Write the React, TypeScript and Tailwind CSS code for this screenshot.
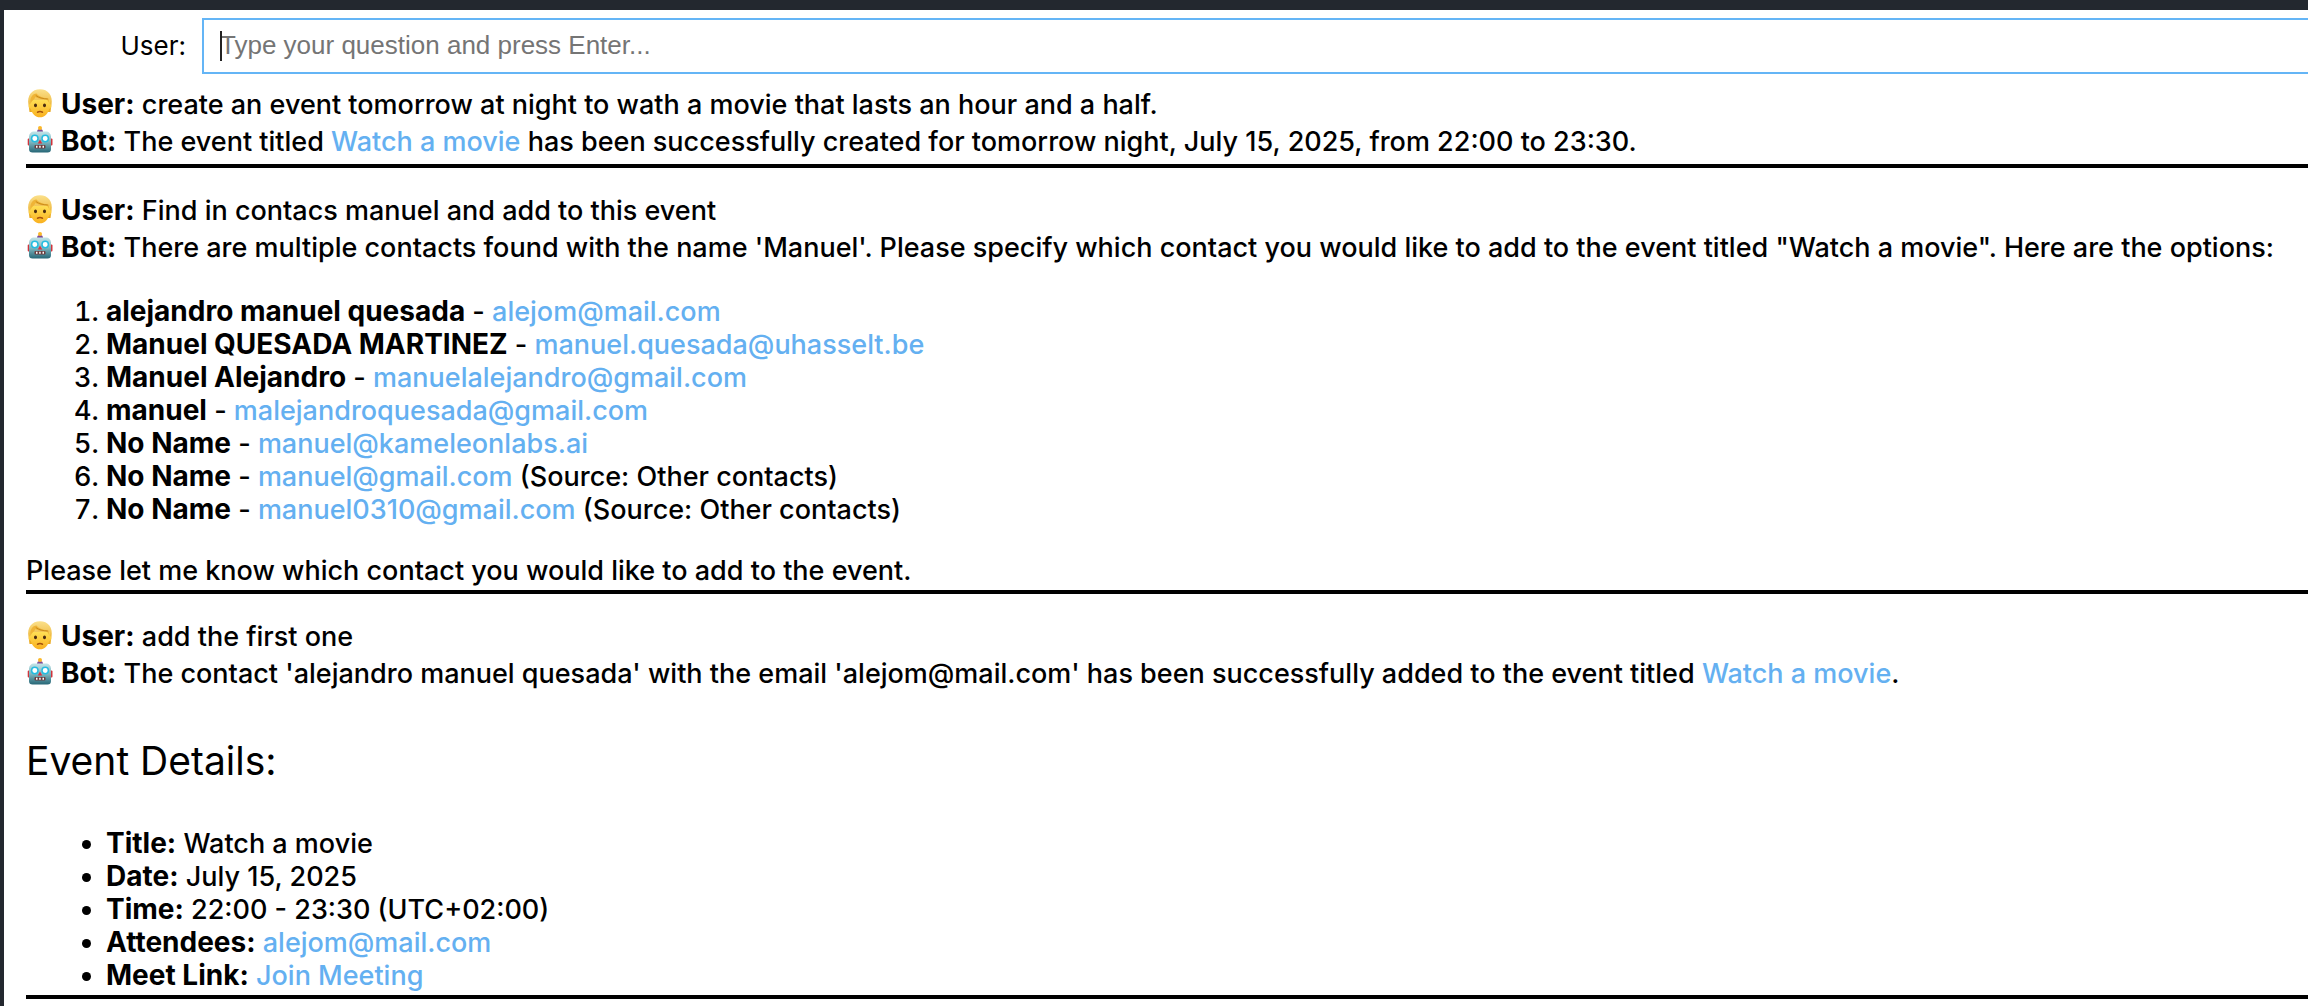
import { useState } from "react";

type Contact = { name: string; email: string; note?: string };

const contacts: Contact[] = [
    { name: "alejandro manuel quesada", email: "alejom@mail.com" },
    { name: "Manuel QUESADA MARTINEZ", email: "manuel.quesada@uhasselt.be" },
    { name: "Manuel Alejandro", email: "manuelalejandro@gmail.com" },
    { name: "manuel", email: "malejandroquesada@gmail.com" },
    { name: "No Name", email: "manuel@kameleonlabs.ai" },
    { name: "No Name", email: "manuel@gmail.com", note: "(Source: Other contacts)" },
    { name: "No Name", email: "manuel0310@gmail.com", note: "(Source: Other contacts)" },
];

function Link({ href, children }: { href: string; children: React.ReactNode }) {
    return <a href={href} className="text-[#64b0f1]">{children}</a>;
}

function Strong({ children }: { children: React.ReactNode }) {
    return <b className="font-bold text-[28px] leading-none">{children}</b>;
}

function UserIcon() {
    return (
        <svg viewBox="0 0 28 30" className="inline-block w-7 h-[30px] mr-[7px] align-[-5px]" aria-hidden="true">
            <defs>
                <linearGradient id="skin" x1="0" y1="0" x2="0" y2="1">
                    <stop offset="0" stopColor="#ffdf55" />
                    <stop offset="1" stopColor="#f9b01f" />
                </linearGradient>
                <linearGradient id="hair" x1="0" y1="0" x2="0" y2="1">
                    <stop offset="0" stopColor="#fbe08a" />
                    <stop offset="1" stopColor="#e9a820" />
                </linearGradient>
            </defs>
            <path d="M2.500 16C.8 6.500 6 .3 14 .3S27.200 6.500 25.500 16l-1 7H3.500z" fill="url(#hair)" />
            <path d="M5 11h18.500l.3 4q1.900.3 1.400 2.700-.4 2-2 2C22 25 18.500 28.300 14 28.300S6 25 4.800 19.700q-1.600 0-2-2-.5-2.400 1.400-2.700z" fill="url(#skin)" />
            <path d="M4.500 15C3.600 9 6.500 4.500 10.500 4.500c2 3 7 4.500 12 5l.8 5c-1-2.500-2-3.700-3.500-4.200-4 .1-8-.8-10.300-2.300-.8 2.500-3.500 3-5 7z" fill="#efb436" />
            <path d="M9.800 6.500c3 2.300 7 3.300 12 3.500" fill="none" stroke="#c98a1c" strokeWidth="1" />
            <ellipse cx="9.500" cy="16.300" rx="1.500" ry="1.900" fill="#4b2c10" />
            <ellipse cx="18.500" cy="16.300" rx="1.500" ry="1.900" fill="#4b2c10" />
            <path d="M11.500 23.200q2.500-1.200 5 0" fill="none" stroke="#a4500c" strokeWidth="1.500" strokeLinecap="round" />
        </svg>
    );
}

function BotIcon() {
    return (
        <svg viewBox="0 0 28 30" className="inline-block w-7 h-[30px] mr-[7px] align-[-5px]" aria-hidden="true">
            <defs>
                <linearGradient id="metal" x1="0" y1="0" x2="0" y2="1">
                    <stop offset="0" stopColor="#c3e4e8" />
                    <stop offset="0.5" stopColor="#7fb6bf" />
                    <stop offset="1" stopColor="#266676" />
                </linearGradient>
            </defs>
            <rect x="1.700" y="12.500" width="3" height="7" rx="1" fill="#d0343c" />
            <rect x="23.500" y="12.500" width="3" height="7" rx="1" fill="#d0343c" />
            <path d="M11 6q0-3 3-3t3 3z" fill="#7d4a93" />
            <circle cx="14" cy="2" r="2" fill="#fbb829" />
            <path d="M7 5.500h14q3 .5 4 4.500v13q0 3.500-3.500 3.500h-15Q3 26.500 3 23V10q1-4 4-4.500z" fill="url(#metal)" />
            <circle cx="8.800" cy="12.500" r="3.200" fill="#fff" stroke="#25bce0" strokeWidth="1.500" />
            <circle cx="19.200" cy="12.500" r="3.200" fill="#fff" stroke="#25bce0" strokeWidth="1.500" />
            <path d="M14 13.500l2.200 4h-4.400z" fill="#e0303a" />
            <rect x="8.500" y="19" width="11" height="3.500" rx="1" fill="#6b3c3e" />
            <path d="M10 20.700h1.500M13.200 20.700h1.500M16.500 20.700h1.500" stroke="#fff" strokeWidth="2" />
        </svg>
    );
}

function UserMessage({ children }: { children: React.ReactNode }) {
    return <p className="leading-[37px]"><UserIcon /><Strong>User:</Strong> {children}</p>;
}

function BotMessage({ children }: { children: React.ReactNode }) {
    return <p className="leading-[37px]"><BotIcon /><Strong>Bot:</Strong> {children}</p>;
}

export default function App() {
    const [question, setQuestion] = useState("");

    return (
        <div className="min-h-screen border-t-[10px] border-l-4 border-[#23282f] bg-white text-black font-['Inter',sans-serif] font-medium text-[27px] leading-[33px]">
            <div className="flex items-center pt-2">
                <label htmlFor="question" className="w-[198px] pr-4 pb-0.5 text-right text-[26px] font-normal">User:</label>
                <div className="relative flex-1 min-w-0">
                    <input
                        id="question"
                        type="text"
                        autoFocus
                        value={question}
                        onChange={(e) => setQuestion(e.target.value)}
                        placeholder="Type your question and press Enter..."
                        className="block w-full h-14 border-2 border-r-0 border-[#64b5f6] px-4 pb-0.5 outline-none caret-transparent font-['Liberation_Sans',sans-serif] font-normal text-[26px] placeholder:text-[#757575]"
                    />
                    {/* caret */}
                    {question === "" && <span className="absolute left-[18px] top-[13px] w-0.5 h-[30px] bg-[#222] pointer-events-none" />}
                </div>
            </div>

            <div className="pl-[22px] pt-3">
                <section className="border-b-4 border-black pb-1 mb-6">
                    <UserMessage>create an event tomorrow at night to wath a movie that lasts an hour and a half.</UserMessage>
                    <BotMessage>
                        The event titled <Link href="#event">Watch a movie</Link> has been successfully created for tomorrow night, July 15, 2025, from 22:00 to 23:30.
                    </BotMessage>
                </section>

                <section className="border-b-4 border-black pb-[3px] mb-6">
                    <UserMessage>Find in contacs manuel and add to this event</UserMessage>
                    <BotMessage>
                        There are multiple contacts found with the name 'Manuel'. Please specify which contact you would like to add to the event titled "Watch a movie". Here are the options:
                    </BotMessage>
                    <ol className="list-decimal pl-20 mt-[29px] mb-7">
                        {contacts.map((contact) => (
                            <li key={contact.email}>
                                <Strong>{contact.name}</Strong> - <Link href={`mailto:${contact.email}`}>{contact.email}</Link> {contact.note}
                            </li>
                        ))}
                    </ol>
                    <p>Please let me know which contact you would like to add to the event.</p>
                </section>

                <section className="border-b-4 border-black pb-[3px]">
                    <UserMessage>add the first one</UserMessage>
                    <BotMessage>
                        The contact 'alejandro manuel quesada' with the email 'alejom@mail.com' has been successfully added to the event titled <Link href="#event">Watch a movie</Link>.
                    </BotMessage>
                    <h3 className="text-[39px] leading-12 font-normal mt-[45px] mb-[42px]">Event Details:</h3>
                    <ul className="list-disc pl-20">
                        <li><Strong>Title:</Strong> Watch a movie</li>
                        <li><Strong>Date:</Strong> July 15, 2025</li>
                        <li><Strong>Time:</Strong> 22:00 - 23:30 (UTC+02:00)</li>
                        <li><Strong>Attendees:</Strong> <Link href="mailto:alejom@mail.com">alejom@mail.com</Link></li>
                        <li><Strong>Meet Link:</Strong> <Link href="#meet">Join Meeting</Link></li>
                    </ul>
                </section>
            </div>
        </div>
    );
}
